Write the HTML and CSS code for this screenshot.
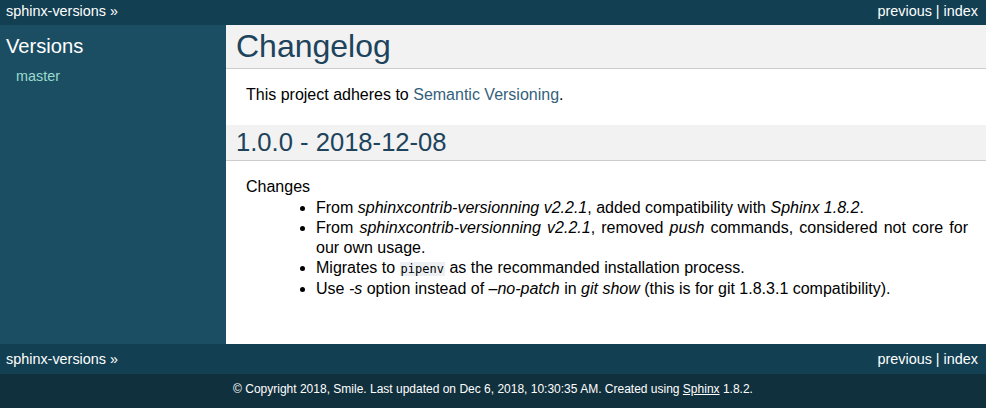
FILE: index.html
```html
<!DOCTYPE html>
<html>
<head>
<meta charset="utf-8">
<title>Changelog — sphinx-versions</title>
<link rel="stylesheet" href="styles.css">
</head>
<body>
<div class="related top">
  <ul class="rel-left"><li><a href="#">sphinx-versions</a> »</li></ul>
  <ul class="rel-right"><li><a href="#">previous</a> | <a href="#">index</a></li></ul>
</div>
<div class="document">
  <div class="sidebar">
    <h3>Versions</h3>
    <ul class="versions"><li><a href="#">master</a></li></ul>
  </div>
  <div class="body">
    <h1>Changelog</h1>
    <p>This project adheres to <a href="#">Semantic Versioning</a>.</p>
    <h2>1.0.0 - 2018-12-08</h2>
    <dl>
      <dt>Changes</dt>
      <dd>
        <ul class="changes">
          <li>From <em>sphinxcontrib-versionning v2.2.1</em>, added compatibility with <em>Sphinx 1.8.2</em>.</li>
          <li>From <em>sphinxcontrib-versionning v2.2.1</em>, removed <em>push</em> commands, considered not core for our own usage.</li>
          <li>Migrates to <code>pipenv</code> as the recommanded installation process.</li>
          <li>Use <em>-s</em> option instead of <em>–no-patch</em> in <em>git show</em> (this is for git 1.8.3.1 compatibility).</li>
        </ul>
      </dd>
    </dl>
  </div>
</div>
<div class="related bottom">
  <ul class="rel-left"><li><a href="#">sphinx-versions</a> »</li></ul>
  <ul class="rel-right"><li><a href="#">previous</a> | <a href="#">index</a></li></ul>
</div>
<div class="footer">© Copyright 2018, Smile. Last updated on Dec 6, 2018, 10:30:35 AM. Created using <a href="#">Sphinx</a> 1.8.2.</div>
</body>
</html>
```
FILE: styles.css
```css
html, body {
  margin: 0;
  padding: 0;
}
body {
  font-family: "Liberation Sans", Arial, sans-serif;
  font-size: 16px;
  color: #000;
  background: #11303d;
}
a { text-decoration: none; }

.related {
  background: #133f52;
  color: #fff;
  font-size: 14.4px;
  display: flex;
  justify-content: space-between;
  align-items: center;
}
.related.top { height: 25px; line-height: 22px; padding-bottom: 3px; box-sizing: border-box; }
.related.bottom { height: 30px; line-height: 30px; }
.related ul {
  list-style: none;
  margin: 0;
  padding: 0;
}
.rel-left { padding-left: 6px !important; }
.rel-right { padding-right: 8px !important; }
.related a { color: #fff; }

.document {
  display: flex;
  min-height: 319px;
}
.sidebar {
  width: 226px;
  flex: none;
  background: #1c4e63;
  color: #fff;
  font-size: 14.4px;
  padding: 10px 5px 0 6px;
  box-sizing: border-box;
}
.sidebar h3 {
  font-size: 20.16px;
  font-weight: normal;
  margin: 0;
  color: #fff;
}
.versions {
  list-style: none;
  margin: 10px 0 0 10px;
  padding: 0;
}
.versions a { color: #98dbcc; }

.body {
  flex: 1;
  background: #fff;
  padding: 0 18px 30px 20px;
  min-width: 0;
}
.body h1, .body h2 {
  font-family: "Liberation Sans", Arial, sans-serif;
  font-weight: normal;
  color: #20435c;
  background: #f2f2f2;
  border-bottom: 1px solid #ccc;
  margin: 20px -18px 10px -20px;
  padding: 3px 0 3px 10px;
}
.body h1 { font-size: 32px; margin-top: 0; }
.body h2 { font-size: 25.6px; }
.body p { line-height: 20px; margin: 16px 0; }
.body p a { color: #355f7c; }

dl { margin: 16px 0 15px 0; }
dt { line-height: 20px; }
dd { margin: 1px 0 0 30px; }
.changes {
  margin: 0;
  padding-left: 40px;
}
.changes li {
  text-align: justify;
  line-height: 20px;
}
code {
  font-family: "DejaVu Sans Mono", monospace;
  font-size: 12px;
  background: #ecf0f3;
  padding: 0 1px;
}

.footer {
  color: #fff;
  font-size: 12px;
  text-align: center;
  height: 34px;
  line-height: 30px;
}
.footer a { color: #fff; text-decoration: underline; }
```
